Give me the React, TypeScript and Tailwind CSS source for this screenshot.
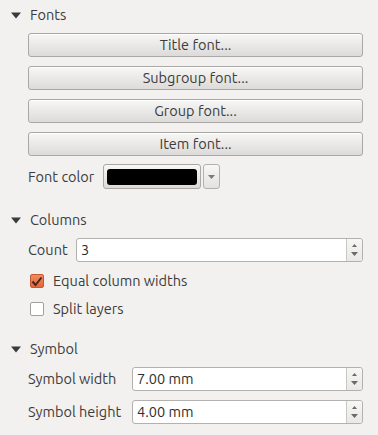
const font = "font-['Ubuntu','Open_Sans','DejaVu_Sans',sans-serif]";

const Triangle = () => (
  <svg width="10" height="7" viewBox="0 0 10 7" className="shrink-0">
    <path d="M0 0.5 L10 0.5 L5 6.5 Z" fill="#3a3a3a" />
  </svg>
);

const SectionHeader = ({ title, className }: { title: string; className?: string }) => (
  <div className={`flex h-[30px] items-center pl-[11px] ${className ?? ""}`}>
    <Triangle />
    <span className="ml-[9px]">{title}</span>
  </div>
);

const PushButton = ({ label }: { label: string }) => (
  <button className="flex h-[24px] w-full items-center justify-center rounded-[3px] border border-[#a9a8a5] bg-gradient-to-b from-[#f7f7f6] to-[#dcdbd9] text-[#3c3c3c] shadow-[inset_0_1px_0_#ffffff]">
    {label}
  </button>
);

const SpinBox = ({ value }: { value: string }) => (
  <div className="flex h-[24px] flex-1 rounded-[3px] border border-[#b3b1ae] bg-white">
    <div className="flex flex-1 items-center pl-[4px] text-[#2e2e2e]">{value}</div>
    <div className="flex w-[16px] flex-col items-center justify-center gap-[5px] rounded-r-[3px] border-l border-[#c9c7c4] bg-gradient-to-b from-[#f6f6f5] to-[#e9e8e6]">
      <svg width="5" height="3" viewBox="0 0 5 3">
        <path d="M0 3 L5 3 L2.5 0 Z" fill="#6a6a6a" />
      </svg>
      <svg width="7" height="4" viewBox="0 0 7 4">
        <path d="M0 0 L7 0 L3.5 4 Z" fill="#6a6a6a" />
      </svg>
    </div>
  </div>
);

const CheckRow = ({ label, checked }: { label: string; checked?: boolean }) => (
  <div className="flex h-[28px] items-center pl-[30px]">
    {checked ? (
      <div className="flex h-[14px] w-[14px] items-center justify-center rounded-[2px] border border-[#c45a32] bg-gradient-to-b from-[#f38a5c] to-[#e3663a]">
        <svg width="12" height="11" viewBox="0 0 12 11">
          <path d="M1.5 5.5 L4.5 9 L10.5 1.5" fill="none" stroke="#4a2518" strokeWidth="2" />
        </svg>
      </div>
    ) : (
      <div className="h-[14px] w-[14px] rounded-[2px] border border-[#a3a19e] bg-white" />
    )}
    <span className="ml-[9px]">{label}</span>
  </div>
);

export default function App() {
  return (
    <div className={`h-[435px] w-[378px] overflow-hidden bg-[#f2f1f0] text-[14.5px] text-[#3c3c3c] ${font}`}>
      <SectionHeader title="Fonts" />
      <div className="mt-[3px] flex flex-col gap-[9px] pl-[28px] pr-[15px]">
        <PushButton label="Title font..." />
        <PushButton label="Subgroup font..." />
        <PushButton label="Group font..." />
        <PushButton label="Item font..." />
      </div>
      <div className="mt-[8px] flex h-[25px] items-center pl-[28px]">
        <span className="w-[75px]">Font color</span>
        <div className="flex h-[25px] w-[98px] items-center justify-center rounded-[3px] border border-[#a9a8a5] bg-gradient-to-b from-[#f7f7f6] to-[#dcdbd9]">
          <div className="h-[16px] w-[90px] rounded-[3px] bg-black" />
        </div>
        <div className="ml-[2px] flex h-[25px] w-[17px] items-center justify-center rounded-[3px] border border-[#b3b1ae] bg-gradient-to-b from-[#f7f7f6] to-[#e3e2e0]">
          <svg width="7" height="4" viewBox="0 0 7 4">
            <path d="M0 0 L7 0 L3.5 4 Z" fill="#7a7a7a" />
          </svg>
        </div>
      </div>

      <SectionHeader title="Columns" className="mt-[16px]" />
      <div className="mt-[3px] flex items-center pl-[28px] pr-[15px]">
        <span className="w-[48px]">Count</span>
        <SpinBox value="3" />
      </div>
      <div className="mt-[5px]">
        <CheckRow label="Equal column widths" checked />
        <CheckRow label="Split layers" />
      </div>

      <SectionHeader title="Symbol" className="mt-[11px]" />
      <div className="mt-[3px] flex flex-col gap-[9px] pl-[28px] pr-[15px]">
        <div className="flex items-center">
          <span className="w-[104px]">Symbol width</span>
          <SpinBox value="7.00 mm" />
        </div>
        <div className="flex items-center">
          <span className="w-[104px]">Symbol height</span>
          <SpinBox value="4.00 mm" />
        </div>
      </div>
    </div>
  );
}
